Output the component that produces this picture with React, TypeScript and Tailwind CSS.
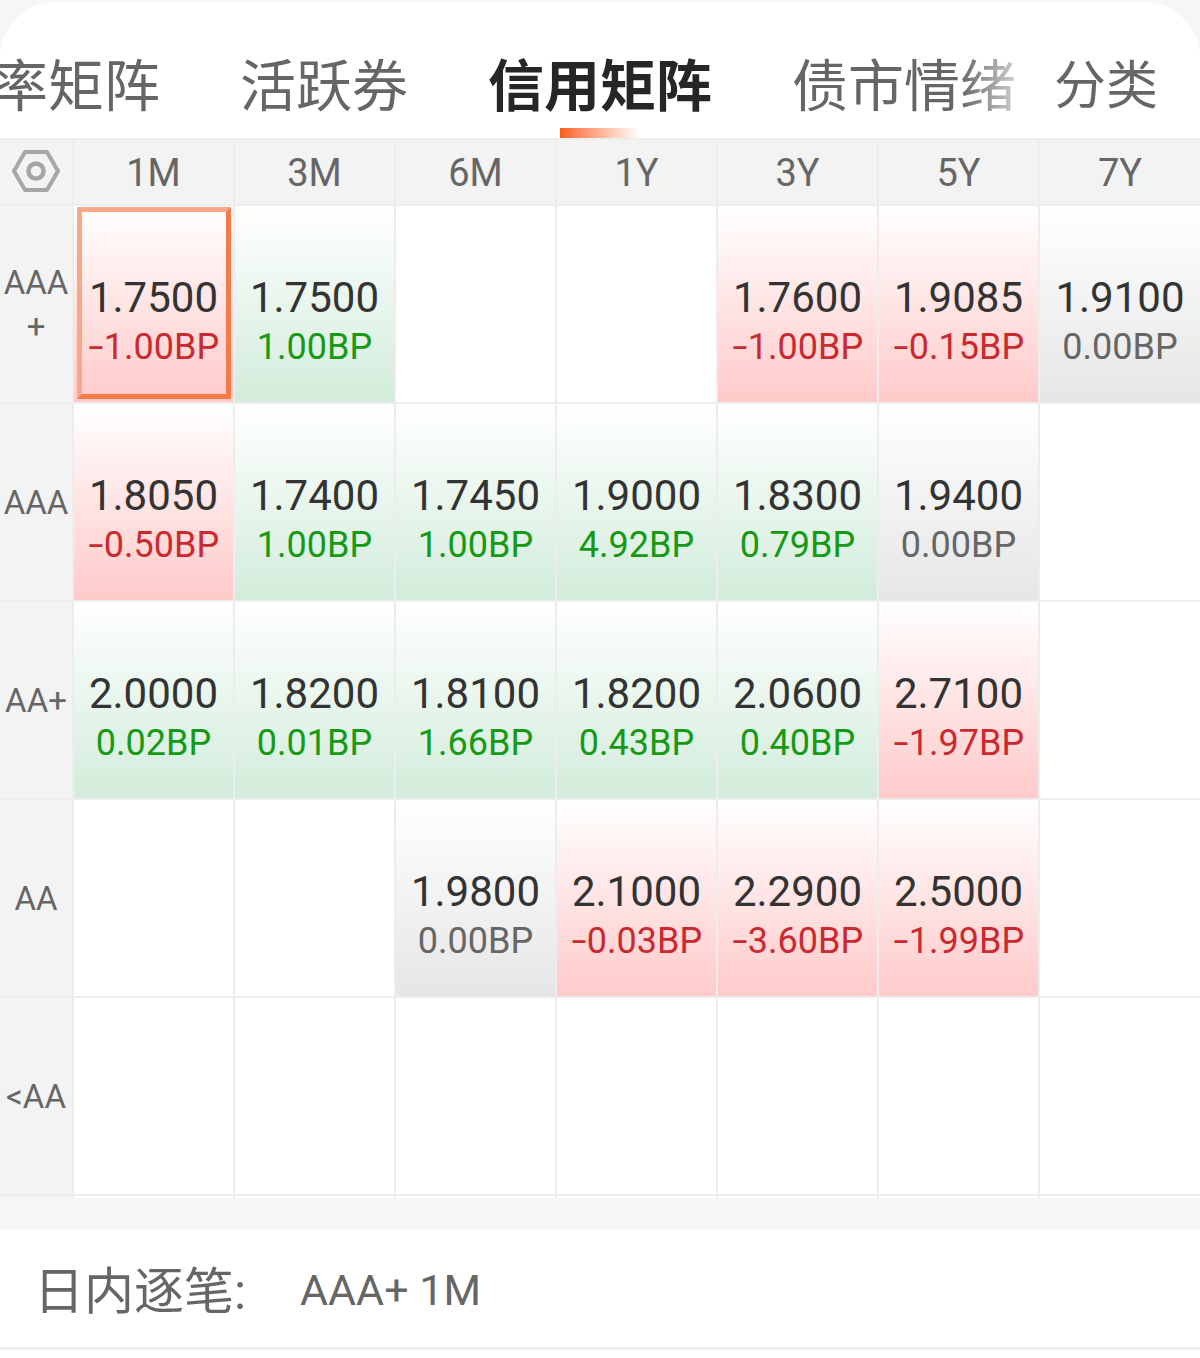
const FONT = "font-['Roboto','Noto_Sans_CJK_SC',sans-serif]";

type Tone = "red" | "green" | "grey";
type Cell = { rate: string; bp: string; tone: Tone; selected?: boolean } | null;

const terms = ["1M", "3M", "6M", "1Y", "3Y", "5Y", "7Y"];

const rows: { label: string; cells: Cell[] }[] = [
  {
    label: "AAA +",
    cells: [
      { rate: "1.7500", bp: "1.00BP", tone: "red", selected: true },
      { rate: "1.7500", bp: "1.00BP", tone: "green" },
      null,
      null,
      { rate: "1.7600", bp: "1.00BP", tone: "red" },
      { rate: "1.9085", bp: "0.15BP", tone: "red" },
      { rate: "1.9100", bp: "0.00BP", tone: "grey" },
    ],
  },
  {
    label: "AAA",
    cells: [
      { rate: "1.8050", bp: "0.50BP", tone: "red" },
      { rate: "1.7400", bp: "1.00BP", tone: "green" },
      { rate: "1.7450", bp: "1.00BP", tone: "green" },
      { rate: "1.9000", bp: "4.92BP", tone: "green" },
      { rate: "1.8300", bp: "0.79BP", tone: "green" },
      { rate: "1.9400", bp: "0.00BP", tone: "grey" },
      null,
    ],
  },
  {
    label: "AA+",
    cells: [
      { rate: "2.0000", bp: "0.02BP", tone: "green" },
      { rate: "1.8200", bp: "0.01BP", tone: "green" },
      { rate: "1.8100", bp: "1.66BP", tone: "green" },
      { rate: "1.8200", bp: "0.43BP", tone: "green" },
      { rate: "2.0600", bp: "0.40BP", tone: "green" },
      { rate: "2.7100", bp: "1.97BP", tone: "red" },
      null,
    ],
  },
  {
    label: "AA",
    cells: [
      null,
      null,
      { rate: "1.9800", bp: "0.00BP", tone: "grey" },
      { rate: "2.1000", bp: "0.03BP", tone: "red" },
      { rate: "2.2900", bp: "3.60BP", tone: "red" },
      { rate: "2.5000", bp: "1.99BP", tone: "red" },
      null,
    ],
  },
  { label: "<AA", cells: [null, null, null, null, null, null, null] },
];

const toneBg: Record<Tone, string> = {
  red: "bg-gradient-to-b from-white to-[#ffcaca]",
  green: "bg-gradient-to-b from-white to-[#d2ecdb]",
  grey: "bg-gradient-to-b from-white to-[#e6e6e6]",
};

const toneText: Record<Tone, string> = {
  red: "text-[#c92a30]",
  green: "text-[#169a16]",
  grey: "text-[#666666]",
};

function RateCell({ cell }: { cell: Cell }) {
  if (!cell) return <div className="bg-white" />;
  return (
    <div className={`relative flex flex-col items-center pt-[68px] ${toneBg[cell.tone]}`}>
      <span className="text-[42px] leading-[48px] text-[#333333]">{cell.rate}</span>
      <span className={`mt-[1px] text-[36px] leading-[48px] ${toneText[cell.tone]}`}>
        {/* the reference's minus is wider than Roboto's hyphen */}
        {cell.tone === "red" && <span className="inline-block scale-x-150 px-[3px]">-</span>}
        {cell.bp}
      </span>
      {cell.selected && (
        <div className="absolute top-[1px] right-[2px] bottom-[3px] left-[3px] border-[5px] border-t-[#f6a888] border-r-[#f47a4a] border-b-[#f47a4a] border-l-[#f6a888]" />
      )}
    </div>
  );
}

export default function App() {
  return (
    <div className={`h-[1358px] w-[1200px] overflow-hidden bg-[#f5f6f8] pt-[2px] ${FONT}`}>
      {/* Tabs */}
      <div className="relative h-[136px] overflow-hidden rounded-t-[56px] bg-white">
        <div className="-ml-[64px] flex gap-[80px] pt-[53px] text-[56px] leading-[64px] whitespace-nowrap text-[#666666]">
          <span>利率矩阵</span>
          <span>活跃券</span>
          <span className="font-bold text-[#262626]">信用矩阵</span>
          <span>债市情绪</span>
          <span className="-ml-[42px] text-[52px]">分类</span>
        </div>
        <div className="absolute bottom-0 left-[560px] h-[10px] w-[80px] bg-gradient-to-r from-[#f85d12] to-white" />
        <div className="absolute top-[50px] left-[960px] h-[70px] w-[58px] bg-gradient-to-r from-white/0 to-white/70" />
      </div>

      {/* Matrix */}
      <div className="grid grid-cols-[72px_repeat(6,159px)_160px] grid-rows-[64px_repeat(5,196px)] gap-[2px] bg-[#ededed] py-[2px]">
        <div className="flex items-center justify-center bg-[#f3f3f3]">
          <svg width="48" height="44" viewBox="0 1 48 44" fill="none" stroke="#a6a6a6">
            <path d="M13 3h22l11 19-11 19H13L2 22z" strokeWidth="4" strokeLinejoin="round" />
            <circle cx="24" cy="22" r="7.5" strokeWidth="4.5" />
          </svg>
        </div>
        {terms.map((t) => (
          <div key={t} className="flex items-center justify-center bg-[#f3f3f3] pt-[2px] text-[38px] text-[#666666]">
            {t}
          </div>
        ))}
        {rows.map((row) => (
          <div key={row.label} className="contents">
            <div className="flex items-center justify-center bg-[#f3f3f3] pt-[2px] text-center text-[33px] leading-[44px] text-[#666666]">
              {row.label}
            </div>
            {row.cells.map((cell, i) => (
              <RateCell key={i} cell={cell} />
            ))}
          </div>
        ))}
      </div>

      {/* Column stubs under the last row */}
      <div className="grid h-[2px] grid-cols-[72px_repeat(6,159px)_160px] gap-x-[2px] bg-[#ededed]">
        <div className="bg-[#f3f3f3]" />
        {terms.map((t) => (
          <div key={t} className="bg-white" />
        ))}
      </div>

      <div className="h-[32px]" />

      {/* Footer */}
      <div className="flex h-[120px] items-center border-b-[3px] border-[#eeeeee] bg-white pl-[34px] text-[#666666]">
        <span className="w-[266px] pt-[8px] text-[50px]">日内逐笔:</span>
        <span className="pt-[3px] text-[43px]">AAA+ 1M</span>
      </div>
      <div className="h-[10px] bg-white" />
    </div>
  );
}
